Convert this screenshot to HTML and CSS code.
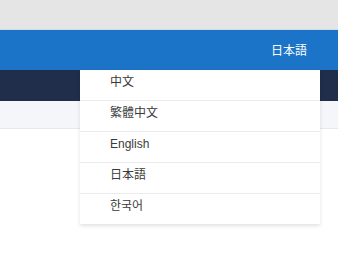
FILE: index.html
```html
<!DOCTYPE html>
<html lang="ja">
<head>
    <meta charset="UTF-8">
    <link rel="stylesheet" href="styles.css">
</head>
<body>
    <div class="topbar"></div>
    <div class="header">
        <div class="lang-switch">
            <span class="lang-current">日本語</span>
            <ul class="lang-menu">
                <li class="lang-item">中文</li>
                <li class="lang-item">繁體中文</li>
                <li class="lang-item">English</li>
                <li class="lang-item">日本語</li>
                <li class="lang-item">한국어</li>
            </ul>
        </div>
    </div>
    <div class="navbar"></div>
    <div class="subbar"></div>
    <div class="content"></div>
</body>
</html>
```

FILE: styles.css
```css
html,
body {
    min-height: 100%;
}

body {
    margin: 0;
    padding: 0;
    background: #fff;
    font-family: "Liberation Sans", "Noto Sans CJK SC", sans-serif;
    font-size: 12px;
    color: #333;
}

.topbar {
    height: 29px;
    background: #e5e5e5;
    border-bottom: 1px solid #d3dae2;
}

.header {
    position: relative;
    z-index: 10;
    height: 40px;
    background: #1b74c7;
    display: flex;
    justify-content: flex-end;
    align-items: center;
    padding-right: 31px;
}

.lang-switch {
    position: relative;
    height: 100%;
    display: flex;
    align-items: center;
}

.lang-current {
    color: #fff;
    font-size: 12px;
    padding-bottom: 2px;
}

.lang-menu {
    position: absolute;
    top: 100%;
    right: -13px;
    width: 240px;
    margin: 0;
    padding: 0;
    list-style: none;
    background: #fff;
    box-shadow: 0 2px 4px rgba(0, 0, 0, 0.12);
}

.lang-item {
    height: 30px;
    line-height: 25px;
    padding-left: 30px;
    border-bottom: 1px solid #ebebeb;
    color: #3a3a3a;
}

.lang-item:last-child {
    border-bottom: none;
}

.navbar {
    height: 31px;
    background: #202e4b;
}

.subbar {
    height: 27px;
    background: #f5f6f9;
    border-bottom: 1px solid #e6e8ec;
}

.content {
    height: 148px;
    background: #fff;
}
```
